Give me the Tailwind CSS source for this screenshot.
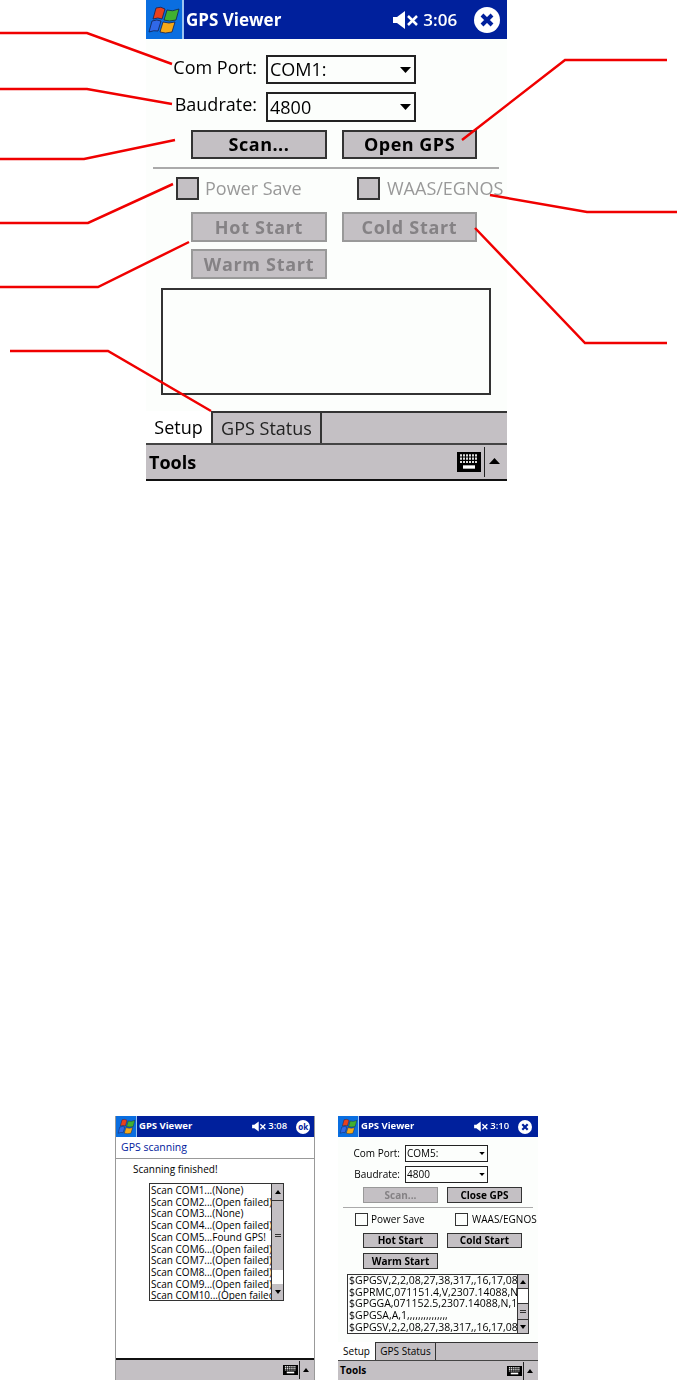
<!DOCTYPE html>
<html lang="en">
<head>
    <meta charset="UTF-8">
    <meta name="viewport" content="width=device-width, initial-scale=1.0">
    <title>GPS Viewer</title>
    <script src="https://cdn.jsdelivr.net/npm/@tailwindcss/browser@4"></script>
</head>
<body class="relative w-[678px] h-[1381px] overflow-hidden bg-white font-['Open_Sans','Noto_Sans',sans-serif] text-black">

    <!-- large screen -->
    <div class="ml-[146px] w-[361px] h-[481px] flex flex-col bg-[#fcfefc] blur-[0.4px]">
        <div class="h-[39px] flex items-center bg-[#00209c] text-white">
            <div class="w-[38px] h-full flex items-center justify-center bg-[#0a6ee0] border-r-2 border-[#9cc4f0]">
                <svg width="34" height="30" viewBox="0 0 34 30" stroke="#14204a" stroke-width="0.8">
                    <path d="M9 3 Q14 1 18 4 L15 14 Q11 12 6 14 Z" fill="#e8401c"/>
                    <path d="M20 5 Q25 7 32 4 L29 15 Q22 17 17 15 Z" fill="#40b030"/>
                    <path d="M5 16 Q10 14 14 16 L11 26 Q7 25 2 27 Z" fill="#3068e8"/>
                    <path d="M16 17 Q22 19 28 17 L25 27 Q18 29 13 27 Z" fill="#f4a818"/>
                </svg>
            </div>
            <span class="ml-[2px] text-[17px] font-bold">GPS Viewer</span>
            <svg class="ml-[112px]" width="25" height="20" viewBox="0 0 25 20" fill="white">
                <path d="M0 7 H4 L12 1 V19 L4 13 H0 Z"/>
                <path d="M15 6 L24 15 M24 6 L15 15" stroke="white" stroke-width="2.5"/>
            </svg>
            <span class="ml-[5px] text-[17px] font-semibold">3:06</span>
            <svg class="ml-[17px]" width="26" height="26" viewBox="0 0 26 26">
                <circle cx="13" cy="13" r="13" fill="white"/>
                <path d="M8 8 L18 18 M18 8 L8 18" stroke="#00209c" stroke-width="4"/>
            </svg>
        </div>

        <div class="mt-[16px] flex items-center h-[29px]">
            <span class="w-[111px] text-right text-[18px] -mt-[5px]">Com Port:</span>
            <div class="ml-[9px] w-[150px] h-full flex items-center justify-between border-2 border-[#222] pl-[2px] pr-[3px] text-[18px]">
                <span>COM1:</span>
                <svg width="11" height="6" viewBox="0 0 11 6"><path d="M0 0 H11 L5.5 6 Z"/></svg>
            </div>
        </div>
        <div class="mt-[8px] flex items-center h-[30px]">
            <span class="w-[111px] text-right text-[18px] -mt-[5px]">Baudrate:</span>
            <div class="ml-[9px] w-[150px] h-full flex items-center justify-between border-2 border-[#222] pl-[2px] pr-[3px] text-[18px]">
                <span>4800</span>
                <svg width="11" height="6" viewBox="0 0 11 6"><path d="M0 0 H11 L5.5 6 Z"/></svg>
            </div>
        </div>

        <div class="mt-[8px] pl-[45px] flex gap-[15px] h-[29px]">
            <div class="w-[136px] flex items-center justify-center bg-[#c4c0c4] border-2 border-[#333] text-[18px] tracking-[0.5px] font-bold">Scan...</div>
            <div class="w-[135px] flex items-center justify-center bg-[#c4c0c4] border-2 border-[#333] text-[18px] tracking-[0.5px] font-bold">Open GPS</div>
        </div>

        <div class="mt-[8px] ml-[7px] w-[346px] h-[2px] bg-[#aaa]"></div>

        <div class="mt-[8px] pl-[30px] flex items-center h-[23px] text-[18px] text-[#999]">
            <div class="w-[23px] h-full bg-[#c4c0c4] border-2 border-[#333]"></div>
            <span class="ml-[6px] w-[152px]">Power Save</span>
            <div class="w-[23px] h-full bg-[#c4c0c4] border-2 border-[#333]"></div>
            <span class="ml-[7px] whitespace-nowrap">WAAS/EGNOS</span>
        </div>

        <div class="mt-[12px] pl-[45px] flex gap-[15px] h-[30px]">
            <div class="w-[136px] flex items-center justify-center bg-[#c4c0c4] border-2 border-[#999] text-[18px] tracking-[0.7px] font-bold text-[#858285]">Hot Start</div>
            <div class="w-[135px] flex items-center justify-center bg-[#c4c0c4] border-2 border-[#999] text-[18px] tracking-[0.7px] font-bold text-[#858285]">Cold Start</div>
        </div>
        <div class="mt-[7px] pl-[45px] flex h-[30px]">
            <div class="w-[136px] flex items-center justify-center bg-[#c4c0c4] border-2 border-[#999] text-[18px] tracking-[0.7px] font-bold text-[#858285]">Warm Start</div>
        </div>

        <div class="mt-[9px] ml-[15px] w-[330px] h-[107px] border-2 border-[#333]"></div>

        <div class="mt-[16px] h-[32px] flex items-stretch text-[18px]">
            <div class="w-[65px] flex items-center justify-center bg-white">Setup</div>
            <div class="w-[111px] flex items-center justify-center bg-[#c4c0c4] border-x-2 border-t-2 border-[#333] text-[#222]">GPS Status</div>
            <div class="flex-1 bg-[#c4c0c4] border-t-2 border-[#333]"></div>
        </div>
        <div class="flex-1 flex items-center bg-[#c4c0c4] border-t-2 border-b-2 border-t-[#444] border-b-[#111]">
            <span class="ml-[3px] text-[18px] font-bold">Tools</span>
            <svg class="ml-auto" width="24" height="20" viewBox="0 0 24 18" preserveAspectRatio="none">
                <rect width="24" height="18"/>
                <path d="M3 3 H21 M3 6 H21 M3 9 H21" stroke="#ddd" stroke-width="2" stroke-dasharray="2 1"/>
                <rect x="6" y="12" width="12" height="3" fill="white"/>
            </svg>
            <div class="ml-[3px] w-[1px] h-[30px] bg-[#222]"></div>
            <svg class="ml-[4px] mr-[7px] -mt-[3px]" width="11" height="6" viewBox="0 0 11 6"><path d="M5.5 0 L11 6 H0 Z"/></svg>
        </div>
    </div>

    <div class="mt-[635px] pl-[115px] flex gap-[23px] blur-[0.3px]">

        <!-- scan result screen -->
        <div class="w-[200px] h-[264px] flex flex-col bg-white border-x border-[#999]">
            <div class="h-[21px] flex items-center bg-[#00209c] text-white">
                <div class="w-[21px] h-full flex items-center justify-center bg-[#0a6ee0] border-r border-[#9cc4f0]">
                    <svg width="19" height="17" viewBox="0 0 34 30" stroke="#14204a" stroke-width="0.8">
                        <path d="M9 3 Q14 1 18 4 L15 14 Q11 12 6 14 Z" fill="#e8401c"/>
                        <path d="M20 5 Q25 7 32 4 L29 15 Q22 17 17 15 Z" fill="#40b030"/>
                        <path d="M5 16 Q10 14 14 16 L11 26 Q7 25 2 27 Z" fill="#3068e8"/>
                        <path d="M16 17 Q22 19 28 17 L25 27 Q18 29 13 27 Z" fill="#f4a818"/>
                    </svg>
                </div>
                <span class="ml-[2px] text-[9.5px] font-bold">GPS Viewer</span>
                <svg class="ml-[60px]" width="14" height="11" viewBox="0 0 25 20" fill="white">
                    <path d="M0 7 H4 L12 1 V19 L4 13 H0 Z"/>
                    <path d="M15 6 L24 15 M24 6 L15 15" stroke="white" stroke-width="2.5"/>
                </svg>
                <span class="ml-[2px] text-[9.5px] font-semibold">3:08</span>
                <div class="ml-[9px] w-[14px] h-[14px] rounded-full bg-white text-[#00209c] text-[8px] font-bold flex items-center justify-center">ok</div>
            </div>
            <div class="h-[22px] pl-[5px] flex items-center border-b border-[#999] text-[10.5px] text-[#00209c]">GPS scanning</div>
            <div class="mt-[3px] pl-[17px] text-[10px] leading-[14px]">Scanning finished!</div>
            <div class="mt-[7px] ml-[33px] w-[135px] h-[118px] flex border border-[#333] text-[10px] leading-[11.7px]">
                <div class="flex-1 overflow-hidden whitespace-nowrap pl-[1px] pt-[1px]">
                    <div>Scan COM1...(None)</div>
                    <div>Scan COM2...(Open failed)</div>
                    <div>Scan COM3...(None)</div>
                    <div>Scan COM4...(Open failed)</div>
                    <div>Scan COM5...Found GPS!</div>
                    <div>Scan COM6...(Open failed)</div>
                    <div>Scan COM7...(Open failed)</div>
                    <div>Scan COM8...(Open failed)</div>
                    <div>Scan COM9...(Open failed)</div>
                    <div>Scan COM10...(Open failed)</div>
                </div>
                <div class="w-[12px] flex flex-col border-l border-[#333] bg-[#c4c0c4]">
                    <div class="h-[17px] flex items-center justify-center border-b border-[#333]">
                        <svg width="6" height="4" viewBox="0 0 6 4"><path d="M3 0 L6 4 H0 Z"/></svg>
                    </div>
                    <div class="h-[69px] flex items-center justify-center">
                        <div class="w-[6px] h-[3px] border-y border-[#333]"></div>
                    </div>
                    <div class="h-[14px] bg-white"></div>
                    <div class="flex-1 flex items-center justify-center">
                        <svg width="6" height="4" viewBox="0 0 6 4"><path d="M0 0 H6 L3 4 Z"/></svg>
                    </div>
                </div>
            </div>
            <div class="mt-auto h-[22px] flex items-center justify-end bg-[#c4c0c4] border-t-2 border-[#111]">
                <svg width="15" height="10" viewBox="0 0 24 18" preserveAspectRatio="none">
                    <rect width="24" height="18"/>
                    <path d="M3 3 H21 M3 6 H21 M3 9 H21" stroke="#ddd" stroke-width="2" stroke-dasharray="2 1"/>
                    <rect x="6" y="12" width="12" height="3" fill="white"/>
                </svg>
                <div class="ml-[1px] w-[1px] h-[18px] bg-[#222]"></div>
                <svg class="ml-[3px] mr-[5px]" width="6" height="4" viewBox="0 0 6 4"><path d="M3 0 L6 4 H0 Z"/></svg>
            </div>
        </div>

        <!-- open gps screen -->
        <div class="w-[200px] h-[264px] flex flex-col bg-[#fcfefc]">
            <div class="h-[21px] flex items-center bg-[#00209c] text-white">
                <div class="w-[21px] h-full flex items-center justify-center bg-[#0a6ee0] border-r border-[#9cc4f0]">
                    <svg width="19" height="17" viewBox="0 0 34 30" stroke="#14204a" stroke-width="0.8">
                        <path d="M9 3 Q14 1 18 4 L15 14 Q11 12 6 14 Z" fill="#e8401c"/>
                        <path d="M20 5 Q25 7 32 4 L29 15 Q22 17 17 15 Z" fill="#40b030"/>
                        <path d="M5 16 Q10 14 14 16 L11 26 Q7 25 2 27 Z" fill="#3068e8"/>
                        <path d="M16 17 Q22 19 28 17 L25 27 Q18 29 13 27 Z" fill="#f4a818"/>
                    </svg>
                </div>
                <span class="ml-[2px] text-[9.5px] font-bold">GPS Viewer</span>
                <svg class="ml-[60px]" width="14" height="11" viewBox="0 0 25 20" fill="white">
                    <path d="M0 7 H4 L12 1 V19 L4 13 H0 Z"/>
                    <path d="M15 6 L24 15 M24 6 L15 15" stroke="white" stroke-width="2.5"/>
                </svg>
                <span class="ml-[2px] text-[9.5px] font-semibold">3:10</span>
                <svg class="ml-[9px]" width="14" height="14" viewBox="0 0 26 26">
                    <circle cx="13" cy="13" r="13" fill="white"/>
                    <path d="M8 8 L18 18 M18 8 L8 18" stroke="#00209c" stroke-width="4"/>
                </svg>
            </div>

            <div class="mt-[8px] flex items-center h-[17px] text-[10px]">
                <span class="w-[62px] text-right">Com Port:</span>
                <div class="ml-[5px] w-[83px] h-full flex items-center justify-between border border-[#222] pl-[1px] pr-[2px]">
                    <span>COM5:</span>
                    <svg width="6" height="3" viewBox="0 0 11 6"><path d="M0 0 H11 L5.5 6 Z"/></svg>
                </div>
            </div>
            <div class="mt-[4px] flex items-center h-[17px] text-[10px]">
                <span class="w-[62px] text-right">Baudrate:</span>
                <div class="ml-[5px] w-[83px] h-full flex items-center justify-between border border-[#222] pl-[1px] pr-[2px]">
                    <span>4800</span>
                    <svg width="6" height="3" viewBox="0 0 11 6"><path d="M0 0 H11 L5.5 6 Z"/></svg>
                </div>
            </div>

            <div class="mt-[4px] pl-[25px] flex gap-[9px] h-[16px] text-[10px] font-bold">
                <div class="w-[75px] flex items-center justify-center bg-[#c4c0c4] border border-[#999] text-[#858285]">Scan...</div>
                <div class="w-[75px] flex items-center justify-center bg-[#c4c0c4] border border-[#333]">Close GPS</div>
            </div>

            <div class="mt-[4px] ml-[5px] w-[190px] h-[1px] bg-[#aaa]"></div>

            <div class="mt-[5px] pl-[17px] flex items-center h-[13px] text-[10px]">
                <div class="w-[13px] h-full border border-[#333]"></div>
                <span class="ml-[3px] w-[84px]">Power Save</span>
                <div class="w-[13px] h-full border border-[#333]"></div>
                <span class="ml-[4px] whitespace-nowrap">WAAS/EGNOS</span>
            </div>

            <div class="mt-[7px] pl-[25px] flex gap-[9px] h-[15px] text-[10px] font-bold">
                <div class="w-[75px] flex items-center justify-center bg-[#c4c0c4] border border-[#333]">Hot Start</div>
                <div class="w-[75px] flex items-center justify-center bg-[#c4c0c4] border border-[#333]">Cold Start</div>
            </div>
            <div class="mt-[5px] pl-[25px] flex h-[16px] text-[10px] font-bold">
                <div class="w-[75px] flex items-center justify-center bg-[#c4c0c4] border border-[#333]">Warm Start</div>
            </div>

            <div class="mt-[5px] ml-[9px] w-[182px] h-[60px] flex border border-[#333] text-[10.5px] leading-[11.7px]">
                <div class="flex-1 overflow-hidden whitespace-nowrap pl-[1px]">
                    <div>$GPGSV,2,2,08,27,38,317,,16,17,08</div>
                    <div>$GPRMC,071151.4,V,2307.14088,N,</div>
                    <div>$GPGGA,071152.5,2307.14088,N,12</div>
                    <div>$GPGSA,A,1,,,,,,,,,,,,,,,</div>
                    <div>$GPGSV,2,2,08,27,38,317,,16,17,08</div>
                </div>
                <div class="w-[11px] flex flex-col border-l border-[#333] bg-white">
                    <div class="h-[14px] flex items-center justify-center bg-[#c4c0c4] border-b border-[#333]">
                        <svg width="6" height="4" viewBox="0 0 6 4"><path d="M3 0 L6 4 H0 Z"/></svg>
                    </div>
                    <div class="h-[14px]"></div>
                    <div class="h-[16px] flex items-center justify-center bg-[#c4c0c4] border-t border-[#333]">
                        <div class="w-[6px] h-[3px] border-y border-[#333]"></div>
                    </div>
                    <div class="flex-1 flex items-center justify-center bg-[#c4c0c4] border-t border-[#333]">
                        <svg width="6" height="4" viewBox="0 0 6 4"><path d="M0 0 H6 L3 4 Z"/></svg>
                    </div>
                </div>
            </div>

            <div class="mt-auto h-[18px] flex items-stretch text-[10px]">
                <div class="w-[37px] flex items-center justify-center bg-white">Setup</div>
                <div class="w-[61px] flex items-center justify-center bg-[#c4c0c4] border-x border-t border-[#333]">GPS Status</div>
                <div class="flex-1 bg-[#c4c0c4] border-t border-[#333]"></div>
            </div>
            <div class="h-[20px] flex items-center bg-[#c4c0c4] border-t border-[#444]">
                <span class="ml-[2px] text-[10px] font-bold">Tools</span>
                <svg class="ml-auto" width="15" height="10" viewBox="0 0 24 18" preserveAspectRatio="none">
                    <rect width="24" height="18"/>
                    <path d="M3 3 H21 M3 6 H21 M3 9 H21" stroke="#ddd" stroke-width="2" stroke-dasharray="2 1"/>
                    <rect x="6" y="12" width="12" height="3" fill="white"/>
                </svg>
                <div class="ml-[1px] w-[1px] h-[18px] bg-[#222]"></div>
                <svg class="ml-[3px] mr-[5px]" width="6" height="4" viewBox="0 0 6 4"><path d="M3 0 L6 4 H0 Z"/></svg>
            </div>
        </div>
    </div>

    <!-- callout lines over the large screen -->
    <svg class="absolute left-0 top-0 pointer-events-none" width="678" height="481" fill="none" stroke="#f00000" stroke-width="2.5">
        <polyline points="0,33 87,33 172,64"/>
        <polyline points="0,89 87,89 172,104"/>
        <polyline points="0,159 84,159 175,140"/>
        <polyline points="0,223 88,223 173,184"/>
        <polyline points="0,287 98,287 189,242"/>
        <polyline points="10,351 108,351 211,411"/>
        <polyline points="667,60 565,60 462,140"/>
        <polyline points="677,212 587,212 490,195"/>
        <polyline points="667,343 585,343 475,228"/>
    </svg>
</body>
</html>
